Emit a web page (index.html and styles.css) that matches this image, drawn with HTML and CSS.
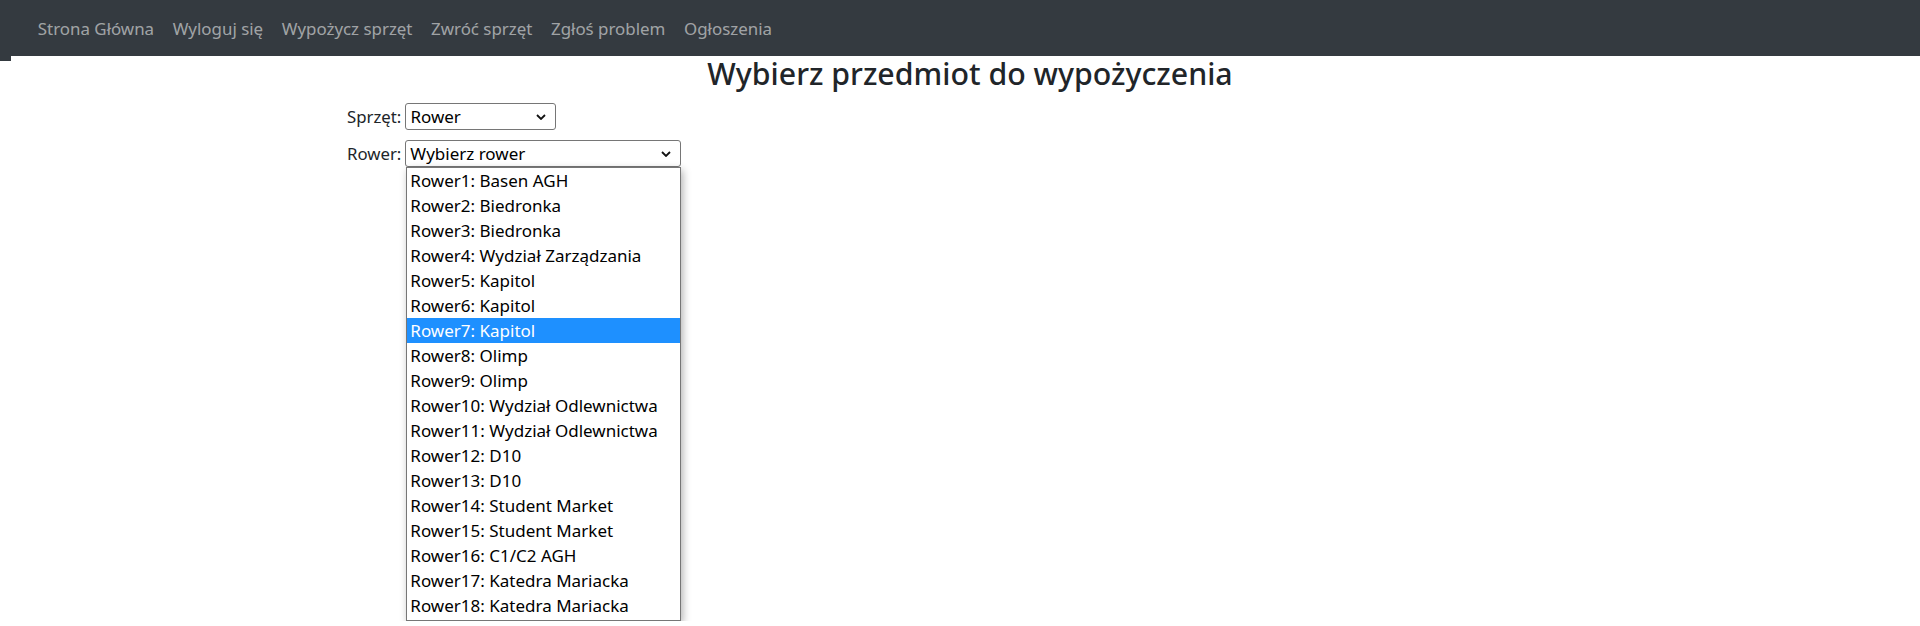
FILE: index.html
```html
<!DOCTYPE html>
<html lang="pl">
<head>
<meta charset="utf-8">
<title>Wypożycz sprzęt</title>
<link rel="stylesheet" href="styles.css">
</head>
<body>
<nav class="topbar">
  <a class="nav-link" href="#">Strona Główna</a>
  <a class="nav-link" href="#">Wyloguj się</a>
  <a class="nav-link" href="#">Wypożycz sprzęt</a>
  <a class="nav-link" href="#">Zwróć sprzęt</a>
  <a class="nav-link" href="#">Zgłoś problem</a>
  <a class="nav-link" href="#">Ogłoszenia</a>
</nav>
<div class="topbar-nub"></div>
<main class="page">
  <h2 class="title">Wybierz przedmiot do wypożyczenia</h2>
  <div class="form">
    <div class="field">
      <span class="label">Sprzęt:</span>
      <div class="picker picker-small">
        <span class="value">Rower</span>
        <svg class="chev" width="10" height="6" viewBox="0 0 10 6"><path d="M1 1 L5 5 L9 1" fill="none" stroke="#111" stroke-width="1.8"/></svg>
      </div>
    </div>
    <div class="field">
      <span class="label">Rower:</span>
      <div class="picker-wrap">
        <div class="picker picker-wide">
          <span class="value">Wybierz rower</span>
          <svg class="chev" width="10" height="6" viewBox="0 0 10 6"><path d="M1 1 L5 5 L9 1" fill="none" stroke="#111" stroke-width="1.8"/></svg>
        </div>
        <div class="options">
          <div class="opt">Rower1: Basen AGH</div>
          <div class="opt">Rower2: Biedronka</div>
          <div class="opt">Rower3: Biedronka</div>
          <div class="opt">Rower4: Wydział Zarządzania</div>
          <div class="opt">Rower5: Kapitol</div>
          <div class="opt">Rower6: Kapitol</div>
          <div class="opt opt-active">Rower7: Kapitol</div>
          <div class="opt">Rower8: Olimp</div>
          <div class="opt">Rower9: Olimp</div>
          <div class="opt">Rower10: Wydział Odlewnictwa</div>
          <div class="opt">Rower11: Wydział Odlewnictwa</div>
          <div class="opt">Rower12: D10</div>
          <div class="opt">Rower13: D10</div>
          <div class="opt">Rower14: Student Market</div>
          <div class="opt">Rower15: Student Market</div>
          <div class="opt">Rower16: C1/C2 AGH</div>
          <div class="opt">Rower17: Katedra Mariacka</div>
          <div class="opt">Rower18: Katedra Mariacka</div>
        </div>
      </div>
    </div>
  </div>
</main>
</body>
</html>
```

FILE: styles.css
```css
* { box-sizing: border-box; }
html, body { margin: 0; padding: 0; background: #fff; }
body {
  font-family: "Noto Sans", "Open Sans", sans-serif;
  color: #212529;
  font-size: 16px;
}
.topbar {
  height: 56px;
  background: #343a40;
  display: flex;
  align-items: center;
  padding-left: 28.5px;
}
.topbar-nub {
  width: 11px;
  height: 5px;
  background: #343a40;
}
.nav-link {
  color: rgba(255,255,255,0.55);
  text-decoration: none;
  padding: 0 9.3px;
  font-size: 16.9px;
}
.page { margin-top: -5px; }
.title {
  margin: 0;
  padding-left: 20px;
  text-align: center;
  font-size: 30.3px;
  font-weight: 500;
  line-height: 36px;
}
.form {
  padding-left: 347px;
  margin-top: 11px;
  display: flex;
  flex-direction: column;
  gap: 10px;
}
.field {
  display: flex;
  align-items: flex-start;
  gap: 4px;
}
.label { font-size: 16.8px; line-height: 27px; color: #212529; }
.picker-wrap { display: flex; flex-direction: column; align-items: flex-start; }
.picker {
  height: 27px;
  border: 1px solid #767676;
  border-radius: 3px;
  background: #fff;
  display: flex;
  align-items: center;
  justify-content: space-between;
  padding: 0 9px 0 4px;
  font-size: 17px;
  color: #000;
}
.picker-small { width: 151px; }
.picker-wide { width: 276px; }
.chev { display: block; }
.options {
  margin-left: 1px;
  width: 275px;
  padding: 0 0 2px 0;
  background: #fff;
  border: 1px solid #767676;
  box-shadow: 2px 3px 8px rgba(0,0,0,0.3);
  font-size: 17px;
  color: #000;
}
.opt {
  height: 25px;
  line-height: 25px;
  padding-left: 3px;
  white-space: nowrap;
}
.opt-active { background: #1e90ff; color: #fff; }
```
